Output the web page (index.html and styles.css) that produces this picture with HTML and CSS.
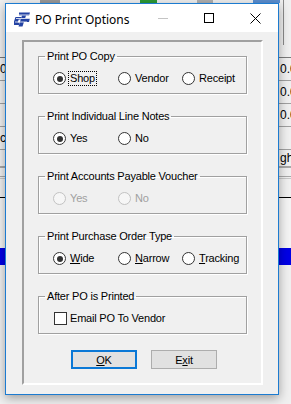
FILE: index.html
```html
<!DOCTYPE html>
<html lang="en">
<head>
  <meta charset="UTF-8">
  <meta name="viewport" content="width=device-width, initial-scale=1.0">
  <title>PO Print Options</title>
  <link rel="stylesheet" href="styles.css">
</head>
<body>
  <!-- the app window behind the dialog -->
  <div class="desk">
    <div class="toolbar">
      <span class="tool tool-grey"></span>
      <span class="tool tool-green"></span>
      <span class="tool tool-grey2"></span>
      <span class="tool tool-blue"></span>
      <span class="tool-sep"></span>
    </div>
    <div class="head"></div>
    <div class="row"><span class="l">0</span><span class="r">0.00</span></div>
    <div class="row"><span class="l"></span><span class="r">0.00</span></div>
    <div class="row"><span class="l"></span><span class="r">0.00</span></div>
    <div class="row"><span class="l">c</span><span class="r"></span></div>
    <div class="row row-short"><span class="l"></span><span class="r">ght</span></div>
    <div class="band"></div>
    <div class="dbl"></div>
    <div class="blackline"></div>
    <div class="blank"></div>
    <div class="selected"></div>
  </div>

  <div class="dialog">
    <div class="titlebar">
      <svg class="app-icon" width="17" height="15" viewBox="0 0 17 15">
        <path d="M5 0.5h11l-1 3h-3l-3.5 11h-4l3.5-11h-3z" fill="#2443a3"/>
        <path d="M1.5 5h6l-0.8 2.5h-2l-1 3h2l-0.8 2.5h-6z" fill="#2443a3"/>
        <path d="M10 6h6l-1 4h-6z" fill="#2443a3"/>
        <path d="M4 3h11M2 6.5h14M1 10h12" stroke="#fff" stroke-width="0.8"/>
      </svg>
      <span class="title">PO Print Options</span>
      <span class="ctl"><svg width="10" height="1"><rect width="10" height="1" fill="#c4c4c4"/></svg></span>
      <span class="ctl"><svg width="10" height="10"><rect x="0.5" y="0.5" width="9" height="9" fill="none" stroke="#000"/></svg></span>
      <span class="ctl"><svg width="11" height="11"><path d="M0.5 0.5L10.5 10.5M10.5 0.5L0.5 10.5" stroke="#000" stroke-width="1"/></svg></span>
    </div>

    <div class="client">
      <div class="panel">
        <fieldset class="group">
          <legend>Print PO Copy</legend>
          <div class="opts">
            <span class="opt"><span class="radio on"></span><span class="focus">Shop</span></span>
            <span class="opt"><span class="radio"></span>Vendor</span>
            <span class="opt"><span class="radio"></span>Receipt</span>
          </div>
        </fieldset>

        <fieldset class="group">
          <legend>Print Individual Line Notes</legend>
          <div class="opts">
            <span class="opt"><span class="radio on"></span>Yes</span>
            <span class="opt"><span class="radio"></span>No</span>
          </div>
        </fieldset>

        <fieldset class="group">
          <legend>Print Accounts Payable Voucher</legend>
          <div class="opts disabled">
            <span class="opt"><span class="radio"></span>Yes</span>
            <span class="opt"><span class="radio"></span>No</span>
          </div>
        </fieldset>

        <fieldset class="group">
          <legend>Print Purchase Order Type</legend>
          <div class="opts">
            <span class="opt"><span class="radio on"></span><span><u>W</u>ide</span></span>
            <span class="opt"><span class="radio"></span><span><u>N</u>arrow</span></span>
            <span class="opt"><span class="radio"></span><span><u>T</u>racking</span></span>
          </div>
        </fieldset>

        <fieldset class="group">
          <legend>After PO is Printed</legend>
          <div class="opts">
            <span class="opt opt-check"><span class="check"></span>Email PO To Vendor</span>
          </div>
        </fieldset>

        <div class="buttons">
          <button class="btn btn-default"><u>O</u>K</button>
          <button class="btn">E<u>x</u>it</button>
        </div>
      </div>
    </div>
  </div>
</body>
</html>
```

FILE: styles.css
```css
body {
  margin: 0;
  width: 291px;
  height: 404px;
  overflow: hidden;
  background: #f0f0f0;
  font-family: "Liberation Sans", Arial, sans-serif;
  font-size: 11px;
  color: #000;
}

/* background app */
.desk {
  display: flex;
  flex-direction: column;
  height: 404px;
}
.toolbar {
  height: 45px;
  display: flex;
  align-items: flex-start;
  background: #f0f0f0;
}
.tool {
  height: 3px;
}
.tool-grey { width: 20px; margin-left: 40px; background: #9a9a9a; }
.tool-green { width: 17px; margin-left: 80px; background: #2c9a35; }
.tool-grey2 { width: 16px; margin-left: 40px; background: #b0b0b0; }
.tool-blue { width: 27px; margin-left: 40px; background: #5b8fd0; }
.tool-sep {
  margin-left: auto;
  margin-right: 7px;
  width: 1px;
  height: 45px;
  background: #8a8a8a;
}
.head {
  height: 12px;
  border-bottom: 1px solid #7a7a7a;
}
.row {
  height: 22px;
  border-bottom: 1px solid #a0a0a0;
  display: flex;
  align-items: center;
  font-size: 12px;
  white-space: nowrap;
}
.row .l {
  width: 280px;
  flex: none;
}
.row-short {
  height: 16px;
  border-bottom: none;
}
.band {
  height: 2px;
  background: #a8a8a8;
  margin-bottom: 8px;
}
.dbl {
  height: 1px;
  border-top: 1px solid #a8a8a8;
  border-bottom: 1px solid #c8c8c8;
  margin-bottom: 18px;
}
.blackline {
  height: 1px;
  background: #000;
}
.blank {
  height: 50px;
  background: #f4f4f4;
}
.selected {
  height: 17px;
  background: #0000e6;
}

/* dialog window */
.dialog {
  position: absolute;
  left: 5px;
  top: 3px;
  width: 274px;
  height: 392px;
  box-sizing: border-box;
  border: 1px solid #1c7bd0;
  background: #f0f0f0;
  display: flex;
  flex-direction: column;
  box-shadow: 0 3px 10px rgba(0, 0, 0, 0.35);
}
.titlebar {
  height: 28px;
  flex: none;
  background: #fff;
  display: flex;
  align-items: center;
}
.app-icon {
  margin-left: 8px;
  margin-top: 2px;
}
.title {
  margin-left: 4px;
  margin-top: 3px;
  flex: 1;
  font-family: "Noto Sans", "Liberation Sans", sans-serif;
  font-size: 12px;
  color: #000;
}
.ctl {
  width: 46px;
  height: 28px;
  display: flex;
  align-items: center;
  justify-content: center;
}
.ctl svg {
  display: block;
}

.client {
  flex: 1;
  padding: 8px 15px 9px 16px;
  display: flex;
}
.panel {
  flex: 1;
  border: 2px solid;
  border-color: #a0a0a0 #fff #fff #a0a0a0;
  padding: 8px 14px 0 14px;
  letter-spacing: -0.2px;
}

.group {
  margin: 0 0 16px 0;
  padding: 9px 0 8px 0;
  width: 209px;
  box-sizing: border-box;
  border: 1px solid #a0a0a0;
  box-shadow: 1px 1px 0 #fff, inset 1px 1px 0 #fff;
  min-inline-size: 0;
}
.group legend {
  margin-left: 6px;
  padding: 0 2px;
  line-height: 13px;
}
.opts {
  display: grid;
  grid-template-columns: 65px 64px auto;
  padding-left: 14px;
  height: 13px;
  line-height: 13px;
}
.opt {
  display: flex;
  align-items: center;
  gap: 4px;
  white-space: nowrap;
}
.radio {
  width: 13px;
  height: 13px;
  box-sizing: border-box;
  border: 1px solid #333;
  border-radius: 50%;
  background: #fff;
  display: flex;
  align-items: center;
  justify-content: center;
  flex: none;
}
.radio.on::after {
  content: "";
  width: 6px;
  height: 6px;
  border-radius: 50%;
  background: #333;
}
.disabled {
  color: #a0a0a0;
}
.disabled .radio {
  border-color: #c2c2c2;
  background: #f6f6f6;
}
.focus {
  outline: 1px dotted #000;
  outline-offset: 0;
  padding: 0 1px;
  margin-left: -1px;
}
.opt-check {
  gap: 3px;
  margin-left: 1px;
}
.check {
  width: 13px;
  height: 13px;
  box-sizing: border-box;
  border: 1px solid #333;
  background: #fff;
  flex: none;
}
.opt u,
.btn u {
  text-decoration-thickness: 1px;
  text-underline-offset: 1px;
}

.buttons {
  display: flex;
  justify-content: center;
  gap: 14px;
  padding-left: 3px;
}
.btn {
  width: 66px;
  height: 19px;
  padding: 0;
  box-sizing: border-box;
  border: 1px solid #adadad;
  background: #e1e1e1;
  font-family: "Liberation Sans", Arial, sans-serif;
  font-size: 11px;
  letter-spacing: -0.2px;
  color: #000;
}
.btn-default {
  border: 2px solid #0a78d6;
}
```
